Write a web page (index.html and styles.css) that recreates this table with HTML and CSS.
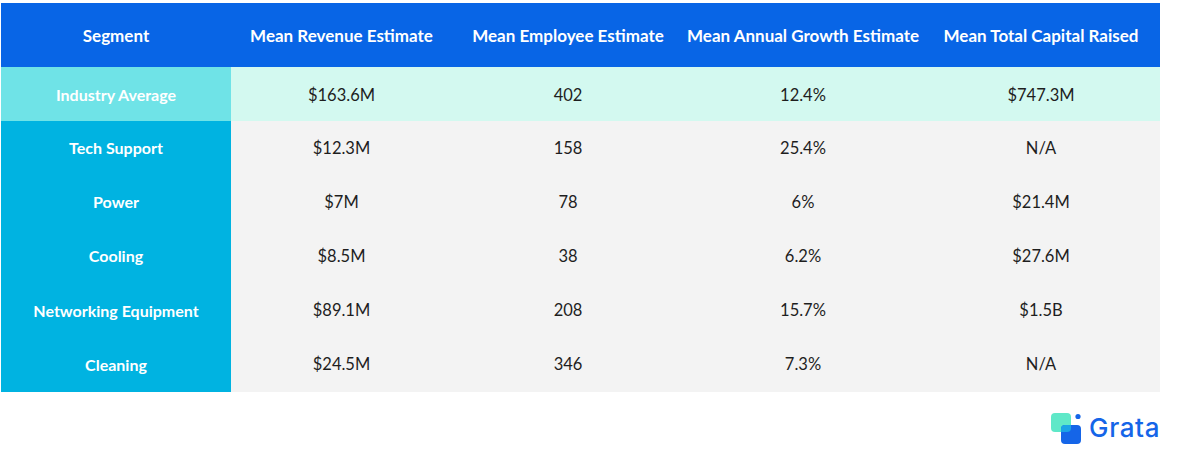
FILE: index.html
```html
<!DOCTYPE html>
<html>
<head>
<meta charset="utf-8">
<link rel="stylesheet" href="styles.css">
</head>
<body>
<div class="page">
  <table class="grid">
    <colgroup>
      <col class="c1"><col class="c2"><col class="c3"><col class="c4"><col class="c5">
    </colgroup>
    <thead>
      <tr class="head">
        <th>Segment</th>
        <th>Mean Revenue Estimate</th>
        <th>Mean Employee Estimate</th>
        <th>Mean Annual Growth Estimate</th>
        <th>Mean Total Capital Raised</th>
      </tr>
    </thead>
    <tbody>
      <tr class="avg">
        <th>Industry Average</th>
        <td>$163.6M</td><td>402</td><td>12.4%</td><td>$747.3M</td>
      </tr>
      <tr class="row">
        <th>Tech Support</th>
        <td>$12.3M</td><td>158</td><td>25.4%</td><td>N/A</td>
      </tr>
      <tr class="row">
        <th>Power</th>
        <td>$7M</td><td>78</td><td>6%</td><td>$21.4M</td>
      </tr>
      <tr class="row">
        <th>Cooling</th>
        <td>$8.5M</td><td>38</td><td>6.2%</td><td>$27.6M</td>
      </tr>
      <tr class="row">
        <th>Networking Equipment</th>
        <td>$89.1M</td><td>208</td><td>15.7%</td><td>$1.5B</td>
      </tr>
      <tr class="row">
        <th>Cleaning</th>
        <td>$24.5M</td><td>346</td><td>7.3%</td><td>N/A</td>
      </tr>
    </tbody>
  </table>
  <div class="brand">
    <svg class="mark" width="31" height="31" viewBox="0 0 31 31">
      <rect x="0" y="0" width="20" height="19" rx="4" fill="#5fe8c8"/>
      <rect x="10" y="12" width="20" height="19" rx="4" fill="#1565e8"/>
      <path d="M10 16 a4 4 0 0 1 4 -4 h6 v3 a4 4 0 0 1 -4 4 h-6 z" fill="#1ba3e6"/>
      <circle cx="27" cy="3.5" r="2.6" fill="#1565e8"/>
    </svg>
    <span class="word">Grata</span>
  </div>
</div>
</body>
</html>
```
FILE: styles.css
```css
html, body {
  margin: 0;
  padding: 0;
  background: #ffffff;
}
.page {
  padding: 3px 0 0 1px;
  width: 1159px;
}
.grid {
  border-collapse: collapse;
  border-spacing: 0;
  table-layout: fixed;
  width: 1159px;
  font-family: Lato, "Liberation Sans", sans-serif;
  font-size: 16px;
}
.c1 { width: 230px; }
.c2 { width: 221px; }
.c3 { width: 232px; }
.c4 { width: 238px; }
.c5 { width: 238px; }
.grid th, .grid td {
  padding: 0 0 1px 0;
  text-align: center;
  vertical-align: middle;
}
.grid th {
  font-weight: 700;
  color: #ffffff;
}
.grid td {
  font-weight: 400;
  font-size: 16.5px;
  color: #1e1e1e;
}
.head th {
  background: #0865e6;
  height: 64px;
  font-size: 17px;
  padding: 0;
}
.avg { height: 54px; }
.avg th, .avg td { padding: 1px 0 0 0; }
.avg th { background: #6fe3e7; }
.avg td { background: #d3f9f0; }
.row { height: 54.2px; }
.row th { background: #00b3e1; }
.row td { background: #f3f3f3; }
.brand {
  display: flex;
  justify-content: flex-end;
  align-items: center;
  gap: 7px;
  margin-top: 21px;
}
.mark { display: block; }
.word {
  font-family: Inter, "Noto Sans", sans-serif;
  font-weight: 500;
  font-size: 26px;
  letter-spacing: 0.6px;
  color: #1565e8;
  line-height: 30px;
}
```
